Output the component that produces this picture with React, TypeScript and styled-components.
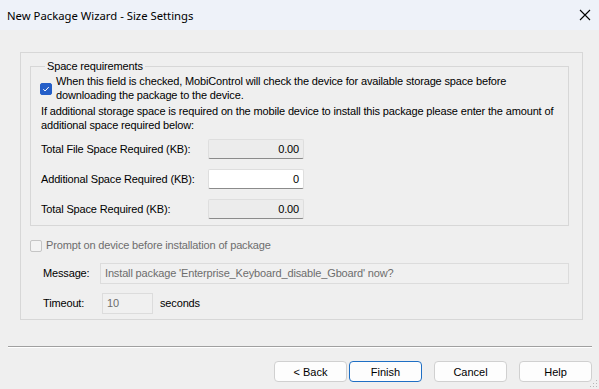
import React from "react";
import styled, { createGlobalStyle } from "styled-components";

const Global = createGlobalStyle`
  html, body { margin: 0; padding: 0; background: #efefef; }
  * { box-sizing: border-box; }
`;

const Window = styled.div`
  width: 599px;
  height: 389px;
  background: #efefef;
  display: flex;
  flex-direction: column;
  font-family: "Liberation Sans", Arial, sans-serif;
  font-size: 11px;
  letter-spacing: -0.15px;
  color: #000;
  position: relative;
  overflow: hidden;
`;

const TitleBar = styled.div`
  height: 30px;
  flex: none;
  background: #eef2f9;
  display: flex;
  align-items: center;
  justify-content: space-between;
  padding: 0 8px 0 7px;
  font-family: "Segoe UI", "Noto Sans", sans-serif;
  font-size: 11.3px;
  letter-spacing: 0;
  color: #000;
`;

const CloseIcon = () => (
  <svg width="12" height="12" viewBox="0 0 12 12">
    <path d="M1 1 L11 11 M11 1 L1 11" stroke="#000" strokeWidth="1.1" fill="none" />
  </svg>
);

const Body = styled.div`
  flex: 1;
  display: flex;
  flex-direction: column;
  padding-top: 22px;
`;

const Panel = styled.div`
  height: 268px;
  margin: 0 16px 0 20px;
  border: 1px solid #d7d7d7;
  padding: 6px 13px 0 9px;
  display: flex;
  flex-direction: column;
`;

const Group = styled.fieldset`
  margin: 0;
  padding: 0 0 6px 9px;
  border: 1px solid #d7d7d7;
  display: flex;
  flex-direction: column;
`;

const Legend = styled.legend`
  margin-left: 5px;
  padding: 0 2px;
  line-height: 14px;
`;

const CheckRow = styled.label<{ disabled?: boolean }>`
  display: flex;
  align-items: center;
  gap: 4px;
  margin-top: 2px;
  line-height: 13.5px;
  white-space: nowrap;
  color: ${(p) => (p.disabled ? "#6d6d6d" : "#000")};
`;

const Box = styled.span<{ checked?: boolean }>`
  width: 12px;
  height: 12px;
  flex: none;
  border-radius: 2px;
  display: flex;
  align-items: center;
  justify-content: center;
  background: ${(p) => (p.checked ? "#245ec8" : "#f3f3f3")};
  border: 1px solid ${(p) => (p.checked ? "#245ec8" : "#c5c5c5")};
`;

const Check = () => (
  <svg width="8" height="8" viewBox="0 0 8 8">
    <path d="M1.3 4.2 L3.1 6 L6.8 2" stroke="#fff" strokeWidth="1" fill="none" />
  </svg>
);

const Para = styled.div`
  margin: 2px 0 0 1px;
  line-height: 14px;
  white-space: nowrap;
`;

const FieldGrid = styled.div`
  display: grid;
  grid-template-columns: 167px 96px;
  row-gap: 10px;
  margin: 7px 0 0 1px;
  align-items: center;
  white-space: nowrap;
`;

const Label = styled.span``;

const Field = styled.div<{ readOnly?: boolean }>`
  height: 20px;
  border: 1px solid #dedede;
  border-bottom-color: #8b8b8b;
  border-radius: 2px;
  background: ${(p) => (p.readOnly ? "#ececec" : "#fff")};
  text-align: right;
  padding: 0 4px;
  line-height: 18px;
`;

const Prompt = styled.div`
  display: flex;
  flex-direction: column;
  margin-top: 11px;
`;

const FormRow = styled.div<{ gapTop?: number }>`
  display: grid;
  grid-template-columns: 57px auto;
  align-items: center;
  margin: ${(p) => p.gapTop ?? 9}px 0 0 13px;
  white-space: nowrap;
`;

const DisabledInput = styled.div<{ w?: string }>`
  width: ${(p) => p.w || "auto"};
  height: 21px;
  border: 1px solid #dcdcdc;
  background: #f0f0f0;
  color: #6d6d6d;
  padding: 0 4px;
  line-height: 19px;
`;

const TimeoutWrap = styled.div`
  display: flex;
  align-items: center;
  gap: 7px;
  padding-left: 2px;
`;

const Separator = styled.div`
  height: 2px;
  margin: 26px 7px 0 8px;
  border-top: 1px solid #a0a0a0;
  border-bottom: 1px solid #ffffff;
`;

const Buttons = styled.div`
  display: flex;
  justify-content: flex-end;
  margin: 13px 7px 0 0;
  gap: 2px;
`;

const Button = styled.button<{ primary?: boolean; spaced?: boolean }>`
  width: 73px;
  height: 21px;
  margin-left: ${(p) => (p.spaced ? "10px" : "0")};
  border-radius: 4px;
  background: #fdfdfd;
  border: 1px solid ${(p) => (p.primary ? "#1f6fc4" : "#d0d0d0")};
  font-family: "Liberation Sans", Arial, sans-serif;
  font-size: 11px;
  color: #000;
  padding: 0;
`;

const Grip = styled.svg`
  position: absolute;
  right: 1px;
  bottom: 1px;
`;

export default function App() {
  return (
    <>
      <Global />
      <Window>
        <TitleBar>
          <span>New Package Wizard - Size Settings</span>
          <CloseIcon />
        </TitleBar>
        <Body>
          <Panel>
            <Group>
              <Legend>Space requirements</Legend>
              <CheckRow>
                <Box checked>
                  <Check />
                </Box>
                <span>
                  When this field is checked, MobiControl will check the device for available storage space before
                  <br />
                  downloading the package to the device.
                </span>
              </CheckRow>
              <Para>
                If additional storage space is required on the mobile device to install this package please enter the amount of
                <br />
                additional space required below:
              </Para>
              <FieldGrid>
                <Label>Total File Space Required (KB):</Label>
                <Field readOnly>0.00</Field>
                <Label>Additional Space Required (KB):</Label>
                <Field>0</Field>
                <Label>Total Space Required (KB):</Label>
                <Field readOnly>0.00</Field>
              </FieldGrid>
            </Group>
            <Prompt>
              <CheckRow disabled>
                <Box />
                <span>Prompt on device before installation of package</span>
              </CheckRow>
              <FormRow gapTop={10}>
                <Label>Message:</Label>
                <DisabledInput>Install package 'Enterprise_Keyboard_disable_Gboard' now?</DisabledInput>
              </FormRow>
              <FormRow>
                <Label>Timeout:</Label>
                <TimeoutWrap>
                  <DisabledInput w="51px">10</DisabledInput>
                  <span>seconds</span>
                </TimeoutWrap>
              </FormRow>
            </Prompt>
          </Panel>
          <Separator />
          <Buttons>
            <Button>&lt; Back</Button>
            <Button primary>Finish</Button>
            <Button spaced>Cancel</Button>
            <Button spaced>Help</Button>
          </Buttons>
        </Body>
        <Grip width="10" height="10" viewBox="0 0 10 10">
          <g fill="#b8b8b8">
            <rect x="8" y="2" width="1" height="1" />
            <rect x="5" y="5" width="1" height="1" />
            <rect x="8" y="5" width="1" height="1" />
            <rect x="2" y="8" width="1" height="1" />
            <rect x="5" y="8" width="1" height="1" />
            <rect x="8" y="8" width="1" height="1" />
          </g>
        </Grip>
      </Window>
    </>
  );
}
